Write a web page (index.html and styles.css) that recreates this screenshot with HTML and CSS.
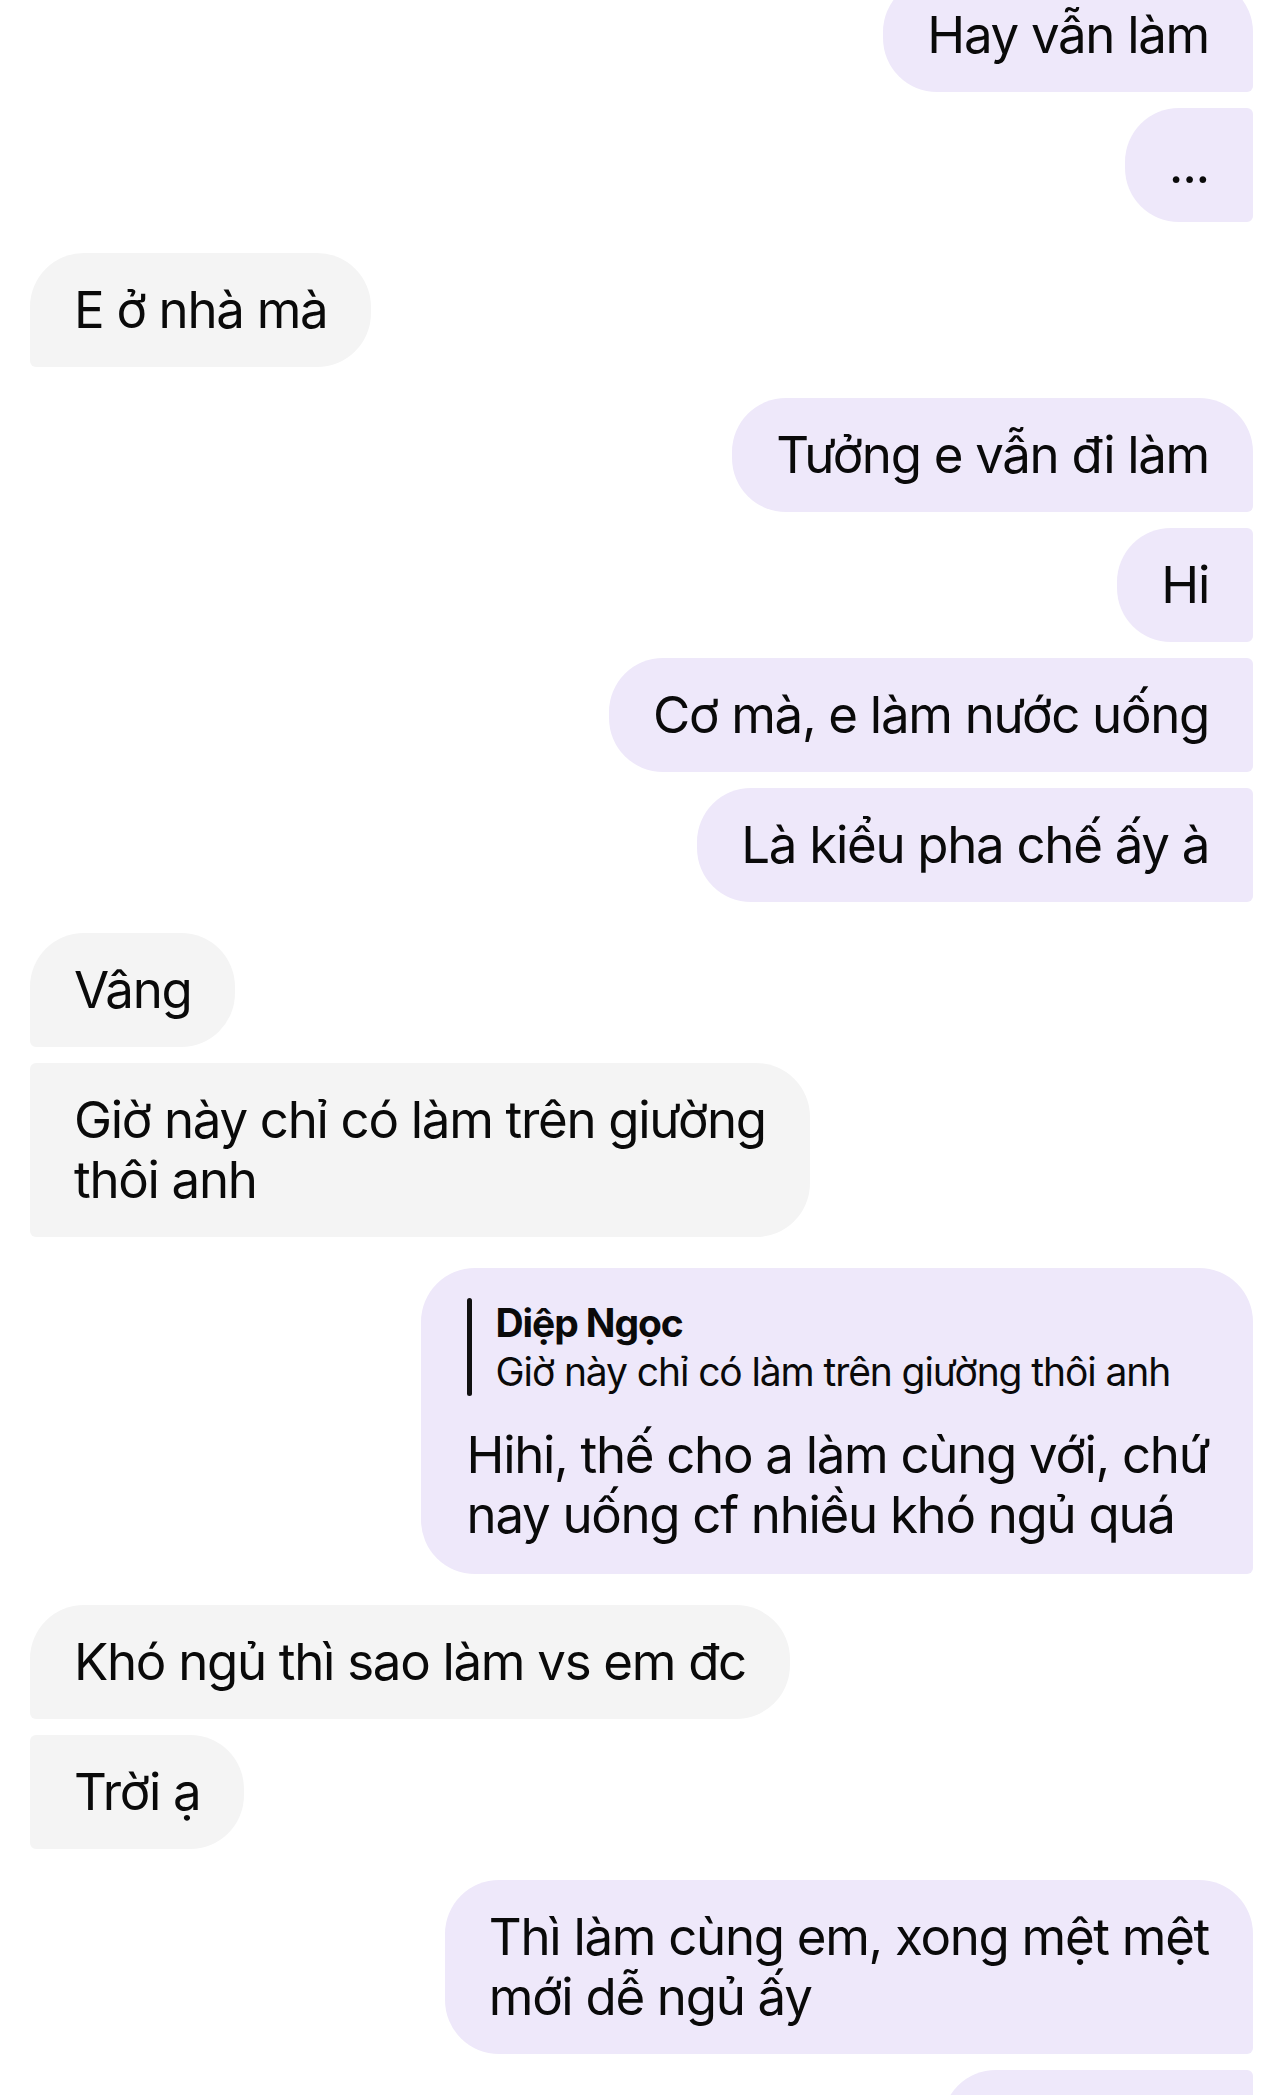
FILE: index.html
```html
<!DOCTYPE html>
<html lang="vi">
<head>
<meta charset="utf-8">
<title>Chat</title>
<link rel="stylesheet" href="styles.css">
</head>
<body>
<div class="chat">
  <div class="group sent">
    <div class="msg first">Hay vẫn làm</div>
    <div class="msg">...</div>
  </div>
  <div class="group recv">
    <div class="msg first">E ở nhà mà</div>
  </div>
  <div class="group sent">
    <div class="msg first">Tưởng e vẫn đi làm</div>
    <div class="msg">Hi</div>
    <div class="msg">Cơ mà, e làm nước uống</div>
    <div class="msg">Là kiểu pha chế ấy à</div>
  </div>
  <div class="group recv">
    <div class="msg first">Vâng</div>
    <div class="msg">Giờ này chỉ có làm trên giường<br>thôi anh</div>
  </div>
  <div class="group sent">
    <div class="msg first reply">
      <div class="quote">
        <span class="bar"></span>
        <div class="qbody">
          <div class="qname">Diệp Ngọc</div>
          <div class="qtext">Giờ này chỉ có làm trên giường thôi anh</div>
        </div>
      </div>
      <div class="rtext">Hihi, thế cho a làm cùng với, chứ<br>nay uống cf nhiều khó ngủ quá</div>
    </div>
  </div>
  <div class="group recv">
    <div class="msg first">Khó ngủ thì sao làm vs em đc</div>
    <div class="msg">Trời ạ</div>
  </div>
  <div class="group sent">
    <div class="msg first">Thì làm cùng em, xong mệt mệt<br>mới dễ ngủ ấy</div>
    <div class="msg tail"></div>
  </div>
</div>
</body>
</html>
```

FILE: styles.css
```css
html, body {
  margin: 0;
  padding: 0;
  background: #ffffff;
  overflow: hidden;
  height: 100%;
}

.chat {
  display: flex;
  flex-direction: column;
  gap: 31px;
  padding: 0 31px 0 30px;
  margin-top: -22px;
  font-family: "Inter", "Noto Sans", "Liberation Sans", sans-serif;
  color: #0a0a0a;
}

.group {
  display: flex;
  flex-direction: column;
  gap: 16px;
}

.sent { align-items: flex-end; }
.recv { align-items: flex-start; }

.msg {
  box-sizing: border-box;
  min-height: 114px;
  padding: 27px 44px;
  font-size: 51px;
  line-height: 60px;
  letter-spacing: -1.3px;
  max-width: 880px;
  white-space: nowrap;
}

.msg.tail {
  width: 311px;
}

.sent .msg {
  background: #eee8fa;
  border-radius: 54px 6px 6px 54px;
}
.sent .msg.first {
  border-radius: 54px 54px 6px 54px;
}

.recv .msg {
  background: #f4f4f4;
  border-radius: 6px 54px 54px 6px;
}
.recv .msg.first {
  border-radius: 54px 54px 54px 6px;
}

.reply {
  padding: 30px 44px 29px 46px;
}

.quote {
  display: flex;
  gap: 24px;
  margin-bottom: 29px;
}

.bar {
  width: 5px;
  border-radius: 3px;
  background: #111111;
  flex: none;
}

.qbody {
  font-size: 39px;
  line-height: 49px;
  letter-spacing: -1.1px;
}

.qname {
  font-weight: 700;
}
```
